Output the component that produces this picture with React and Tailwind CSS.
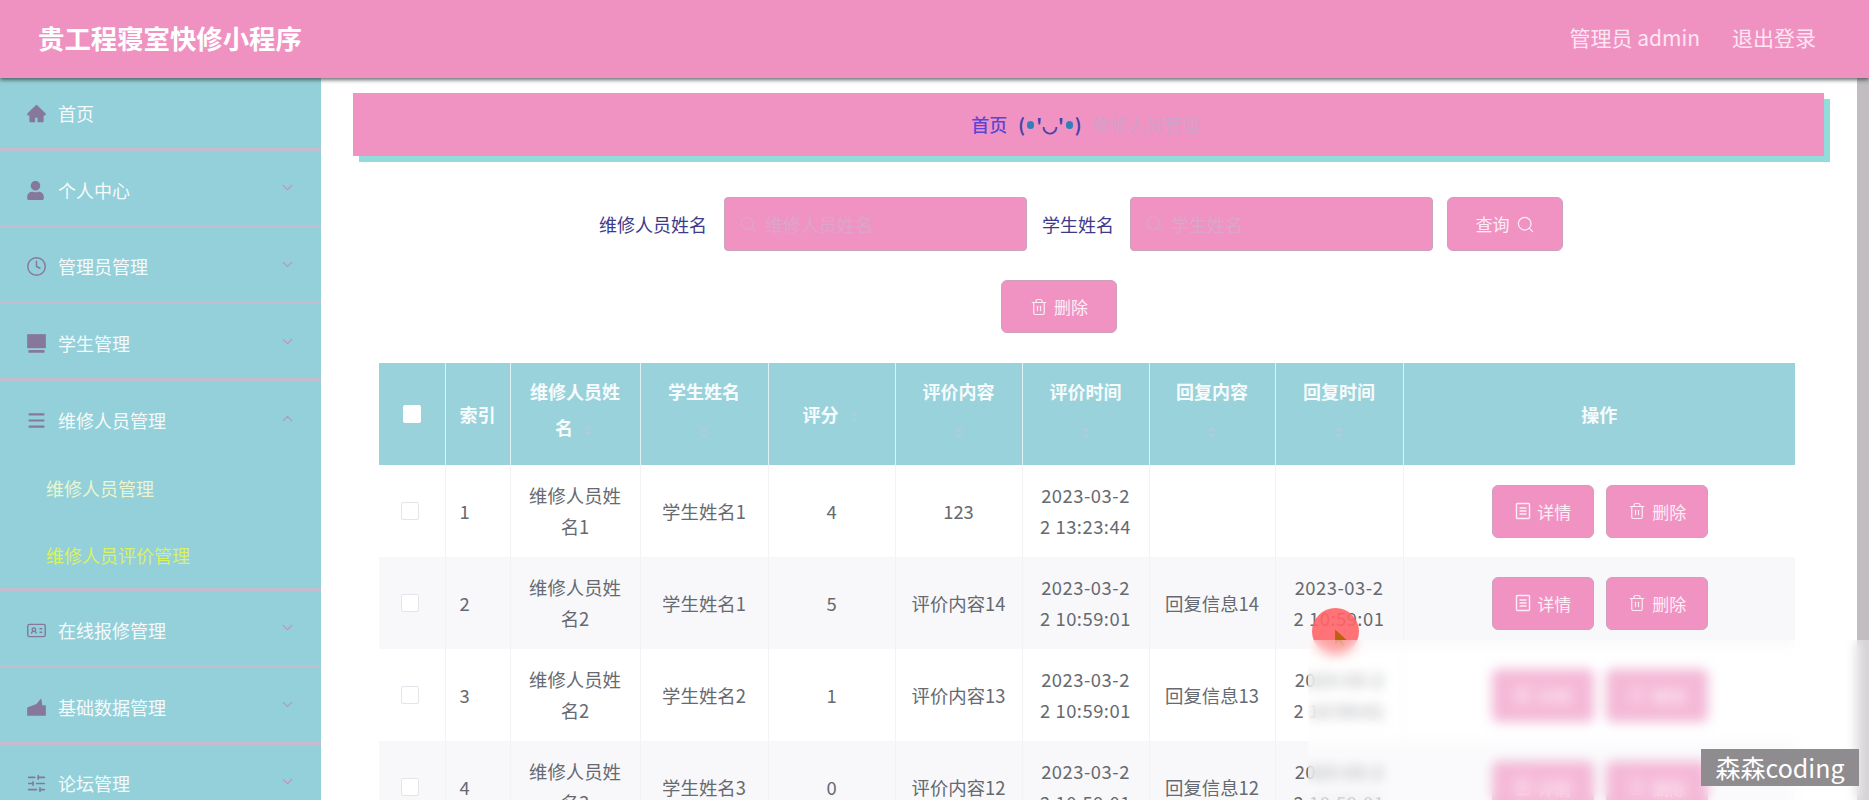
import React from 'react'
import { ChevronDown, ChevronUp, Clock, IdCard, Menu, Search, SlidersHorizontal, Trash2 } from 'lucide-react'
import { AiFillHome } from 'react-icons/ai'
import { FaUser } from 'react-icons/fa'

const iconCls = 'h-[21px] w-[21px] text-[#85789a]'

function ScreenIcon() {
  return (
    <svg viewBox="0 0 18 18" className={iconCls} fill="currentColor">
      <rect x="1" y="1" width="16" height="12" />
      <rect x="2" y="14.5" width="14" height="2.5" rx="1" />
    </svg>
  )
}

function ChartIcon() {
  return (
    <svg viewBox="0 0 18 18" className={iconCls} fill="currentColor">
      <path d="M1 9l8-3 4-5 1 6h3v9H1z" />
    </svg>
  )
}

function TicketIcon() {
  return (
    <svg viewBox="0 0 16 18" className="h-[18px] w-[16px]" fill="none" stroke="currentColor" strokeWidth="1.4">
      <rect x="1.5" y="1.5" width="13" height="15" rx="1" />
      <path d="M4.5 6h7M4.5 9h7M4.5 12h7" />
    </svg>
  )
}

const menu = [
  { name: '首页', icon: <AiFillHome className={iconCls} />, plain: true },
  { name: '个人中心', icon: <FaUser className="h-[19px] w-[19px] text-[#85789a]" /> },
  { name: '管理员管理', icon: <Clock className={iconCls} strokeWidth={1.6} /> },
  { name: '学生管理', icon: <ScreenIcon /> },
  { name: '维修人员管理', icon: <Menu className={iconCls} strokeWidth={2.4} />, open: true },
  { name: '在线报修管理', icon: <IdCard className={iconCls} strokeWidth={1.6} /> },
  { name: '基础数据管理', icon: <ChartIcon /> },
  { name: '论坛管理', icon: <SlidersHorizontal className={iconCls} strokeWidth={1.8} /> },
]

const rows = [
  { id: 1, worker: '维修人员姓名1', student: '学生姓名1', score: 4, text: '123', time: '2023-03-22 13:23:44', reply: '', replyTime: '' },
  { id: 2, worker: '维修人员姓名2', student: '学生姓名1', score: 5, text: '评价内容14', time: '2023-03-22 10:59:01', reply: '回复信息14', replyTime: '2023-03-22 10:59:01' },
  { id: 3, worker: '维修人员姓名2', student: '学生姓名2', score: 1, text: '评价内容13', time: '2023-03-22 10:59:01', reply: '回复信息13', replyTime: '2023-03-22 10:59:01' },
  { id: 4, worker: '维修人员姓名3', student: '学生姓名3', score: 0, text: '评价内容12', time: '2023-03-22 10:59:01', reply: '回复信息12', replyTime: '2023-03-22 10:59:01' },
]

function Caret({ block }) {
  return (
    <span className={(block ? 'flex h-[46px] ' : 'ml-2 inline-flex h-[18px] align-middle ') + 'w-full max-w-[14px] flex-col items-center justify-center gap-[3px]' + (block ? ' mx-auto' : '')}>
      <span className="h-0 w-0 border-x-[4px] border-b-[5px] border-x-transparent border-b-[#a9cfdb]" />
      <span className="h-0 w-0 border-x-[4px] border-t-[5px] border-x-transparent border-t-[#a9cfdb]" />
    </span>
  )
}

function SideMenu() {
  return (
    <aside className="z-0 -mt-[4px] w-[321px] flex-shrink-0 bg-[#94d0da]">
      {menu.map((m) => (
        <div key={m.name} className="border-b-[3px] border-[#c4bdd0]">
          <div className="flex h-[73.8px] items-center pl-[26px] pr-[25px] pt-[5px] text-[18px] text-[#f4fbfc]">
            <span className="flex w-[32px] flex-shrink-0 items-center">{m.icon}</span>
            <span>{m.name}</span>
            {!m.plain && (m.open
              ? <ChevronUp className="ml-auto -mt-[5px] h-[17px] w-[17px] text-[#c48fb4]" strokeWidth={1.5} />
              : <ChevronDown className="ml-auto -mt-[5px] h-[17px] w-[17px] text-[#c48fb4]" strokeWidth={1.5} />)}
          </div>
          {m.open && (
            <div className="text-[18px]">
              <div className="flex h-[67px] items-center pl-[46px] pt-[1px] text-[#e9f6cf]">维修人员管理</div>
              <div className="flex h-[66px] items-center pl-[46px] pt-[1px] text-[#d9f25f]">维修人员评价管理</div>
            </div>
          )}
        </div>
      ))}
    </aside>
  )
}

function Field({ label, placeholder, gap = 'mr-[16px]' }) {
  return (
    <>
      <label className={gap + ' text-[18px] text-[#3d3a8c]'}>{label}</label>
      <div className="flex h-[54px] w-[303px] items-center rounded-[4px] border border-[#c9a4ba] bg-[#f093c3] pl-[14px] text-[18px] text-[#dca6cb]">
        <Search className="mr-[8px] h-[18px] w-[18px]" strokeWidth={1.5} />
        <input className="w-[240px] bg-transparent outline-none placeholder:text-[#dca6cb]" placeholder={placeholder} readOnly />
      </div>
    </>
  )
}

function PinkButton({ children, className = '' }) {
  return (
    <button className={'flex h-[53px] items-center justify-center gap-[6px] rounded-[6px] border border-[#cfa0bb] bg-[#f093c3] text-[17px] text-[#fdeef6] ' + className}>
      {children}
    </button>
  )
}

const thCls = 'border-r border-[#dff1f4] px-[15px] text-center align-middle font-bold'
const tdCls = 'border-r border-[#f3f3f6] px-[15px] text-center align-middle break-all'

function ReviewTable() {
  return (
    <table className="ml-[58px] mt-[30px] w-[1416px] table-fixed border-collapse text-[18.4px] leading-[31px] text-[#666a70]">
      <colgroup>
        <col className="w-[66px]" />
        <col className="w-[65px]" />
        <col className="w-[130px]" />
        <col className="w-[128px]" />
        <col className="w-[127px]" />
        <col className="w-[127px]" />
        <col className="w-[127px]" />
        <col className="w-[126px]" />
        <col className="w-[128px]" />
        <col className="w-[392px]" />
      </colgroup>
      <thead>
        <tr className="h-[102px] bg-[#99d2da] text-[18px] leading-[36px] text-[#f6fcfd]">
          <th className={thCls}><span className="mx-auto block h-[18px] w-[18px] rounded-[2px] bg-white" /></th>
          <th className="border-r border-[#dff1f4] pl-[14px] text-left align-middle font-bold">索引</th>
          <th className={thCls + ' pb-[10px]'}>维修人员姓名<Caret /></th>
          <th className={thCls}>学生姓名<Caret block /></th>
          <th className={thCls}>评分<Caret /></th>
          <th className={thCls}>评价内容<Caret block /></th>
          <th className={thCls}>评价时间<Caret block /></th>
          <th className={thCls}>回复内容<Caret block /></th>
          <th className={thCls}>回复时间<Caret block /></th>
          <th className="text-center align-middle font-bold">操作</th>
        </tr>
      </thead>
      <tbody>
        {rows.map((r) => (
          <tr key={r.id} className={'h-[92px] ' + (r.id % 2 === 0 ? 'bg-[#f8f8fb]' : 'bg-white')}>
            <td className={tdCls}><span className="ml-[7px] block h-[18px] w-[18px] rounded-[2px] border border-[#e4e4ea] bg-white" /></td>
            <td className="border-r border-[#f3f3f6] pl-[14px] align-middle">{r.id}</td>
            <td className={tdCls}>{r.worker}</td>
            <td className={tdCls}>{r.student}</td>
            <td className={tdCls}>{r.score}</td>
            <td className={tdCls}>{r.text}</td>
            <td className={tdCls + ' tracking-[0.5px]'}>{r.time}</td>
            <td className={tdCls}>{r.reply}</td>
            <td className={tdCls + ' tracking-[0.5px]'}>{r.replyTime}</td>
            <td className="align-middle">
              <div className="flex justify-center gap-[12px] pl-[2px]">
                <PinkButton className="w-[102px]"><TicketIcon />详情</PinkButton>
                <PinkButton className="w-[102px]"><Trash2 className="h-[18px] w-[18px]" strokeWidth={1.5} />删除</PinkButton>
              </div>
            </td>
          </tr>
        ))}
      </tbody>
    </table>
  )
}

export default function App() {
  return (
    <div className="relative flex h-[800px] w-[1869px] flex-col overflow-hidden bg-white font-['Noto_Sans_CJK_SC',sans-serif]">
      <header className="relative z-10 flex h-[78px] flex-shrink-0 items-center justify-between bg-[#ef92c2] pb-[2px] pl-[38px] pr-[53px] shadow-[0_2px_4px_rgba(40,50,50,0.7)]">
        <h1 className="text-[26.4px] font-bold text-white">贵工程寝室快修小程序</h1>
        <div className="flex gap-[32px] text-[21px] text-[#fde6f2]">
          <span>管理员 admin</span>
          <span>退出登录</span>
        </div>
      </header>

      <div className="flex min-h-0 flex-1">
        <SideMenu />

        <main className="min-w-0 flex-1">
          <div className="ml-[32px] mr-[33px] mt-[15px] flex h-[63px] items-center justify-center bg-[#f093c3] pr-[6px] text-[18px] shadow-[6px_6px_0_#93dcdc]">
            <span className="font-medium text-[#5a45d6]">首页</span>
            <span className="ml-[11px] flex items-center font-bold text-[#4a3fa8]">(<span className="mx-[2px] h-[8px] w-[7px] rounded-full bg-[#2f7fb8]" />'◡'<span className="mx-[2px] h-[8px] w-[7px] rounded-full bg-[#2f7fb8]" />)</span>
            <span className="ml-[10px] text-[#d2a0c8]">维修人员管理</span>
          </div>

          <div className="ml-[278px] mt-[41px] flex items-center">
            <Field label="维修人员姓名" placeholder="维修人员姓名" gap="mr-[17px]" />
            <span className="w-[15px]" />
            <Field label="学生姓名" placeholder="学生姓名" />
            <PinkButton className="ml-[14px] h-[54px] w-[116px] border-[#a9a3b4]">查询<Search className="h-[19px] w-[19px]" strokeWidth={1.5} /></PinkButton>
          </div>

          <div className="mt-[29px] flex pl-[680px]">
            <PinkButton className="w-[116px] border-[#c9a9bd]"><Trash2 className="h-[18px] w-[18px]" strokeWidth={1.5} />删除</PinkButton>
          </div>

          <ReviewTable />
        </main>

        <div className="w-[12px] flex-shrink-0 bg-[#c1bdc1]" />
      </div>

      {/* screen recording leftovers on top of the page */}
      <div className="absolute left-[1312px] top-[608px] h-[47px] w-[47px] rounded-full bg-[#ff6468]/90" />
      <svg viewBox="0 0 14 18" className="absolute left-[1334px] top-[628px] h-[20px] w-[15px]">
        <path d="M1 1v14l4-3 3 5 2-1-3-5h5z" fill="#b8620f" />
      </svg>
      <div className="absolute bottom-0 left-[1308px] right-0 top-[640px] bg-white/35 backdrop-blur-[6px]" />
      <div className="absolute left-[1701px] top-[749px] flex h-[37px] w-[158px] items-center justify-center bg-[#8f8c8f] text-[25px] text-white">森森coding</div>
    </div>
  )
}
